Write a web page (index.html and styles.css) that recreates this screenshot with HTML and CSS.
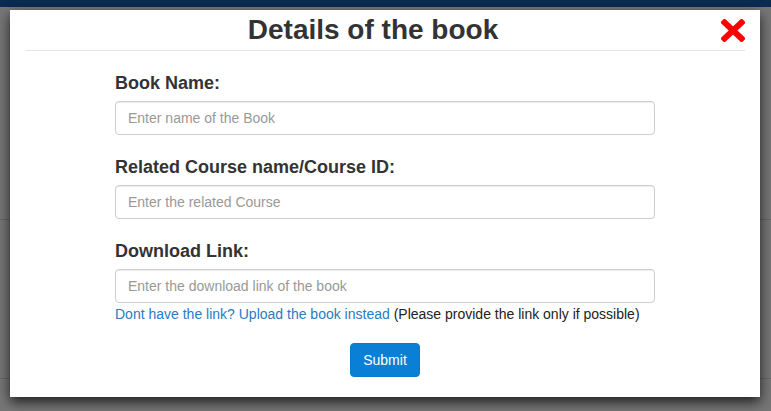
FILE: index.html
```html
<!DOCTYPE html>
<html>
<head>
<meta charset="utf-8">
<link rel="stylesheet" href="styles.css">
</head>
<body>
<div class="page">
  <div class="navbar"></div>
  <div class="band band-top"></div>
  <div class="band band-mid"></div>
</div>
<div class="modal">
  <div class="modal-header">
    <h2 class="modal-title">Details of the book</h2>
    <span class="close" aria-label="close">
      <svg width="24" height="23" viewBox="0 0 24 23"><path d="M3.5 3.5 L20.5 19.5 M20.5 3.5 L3.5 19.5" stroke="#ff0000" stroke-width="6" stroke-linecap="square" fill="none"/></svg>
    </span>
  </div>
  <form class="form">
    <div class="form-group">
      <label class="label">Book Name:</label>
      <input class="input" type="text" placeholder="Enter name of the Book">
    </div>
    <div class="form-group">
      <label class="label">Related Course name/Course ID:</label>
      <input class="input" type="text" placeholder="Enter the related Course">
    </div>
    <div class="form-group last">
      <label class="label">Download Link:</label>
      <input class="input" type="text" placeholder="Enter the download link of the book">
      <p class="help"><a class="link" href="#">Dont have the link? Upload the book instead</a> (Please provide the link only if possible)</p>
    </div>
    <div class="actions">
      <button class="btn" type="button">Submit</button>
    </div>
  </form>
</div>
</body>
</html>
```
FILE: styles.css
```css
html, body {
  margin: 0;
  padding: 0;
  height: 100%;
}
body {
  font-family: "Liberation Sans", Arial, sans-serif;
  font-size: 14px;
  color: #333;
  background: #777;
  overflow: hidden;
}
.page {
  height: 100%;
  display: flex;
  flex-direction: column;
}
.navbar {
  height: 7px;
  background: #0b2b52;
}
.band {
  border-bottom: 1px solid #686868;
}
.band-top {
  height: 212px;
}
.band-mid {
  height: 158px;
}
.modal {
  position: absolute;
  left: 10px;
  top: 10px;
  width: 750px;
  height: 387px;
  background: #fff;
  box-shadow: 0 5px 12px rgba(0, 0, 0, 0.75);
}
.modal-header {
  margin: 0 15px;
  height: 40px;
  border-bottom: 1px solid #e5e5e5;
  display: flex;
  align-items: flex-start;
}
.modal-title {
  flex: 1;
  margin: 0;
  text-align: center;
  font-size: 28px;
  font-weight: bold;
  line-height: 40px;
  color: #333;
}
.close {
  margin-top: 9px;
  width: 24px;
  height: 23px;
  display: block;
}
.close svg {
  display: block;
}
.form {
  width: 540px;
  margin: 18px auto 0;
}
.form-group {
  display: flex;
  flex-direction: column;
  margin-bottom: 18px;
}
.form-group.last {
  margin-bottom: 19px;
}
.label {
  font-size: 18px;
  font-weight: bold;
  line-height: 28px;
  margin-bottom: 4px;
  color: #333;
}
.input {
  box-sizing: border-box;
  height: 34px;
  width: 100%;
  padding: 6px 12px;
  font-family: "Liberation Sans", Arial, sans-serif;
  font-size: 14px;
  color: #555;
  border: 1px solid #ccc;
  border-radius: 4px;
  box-shadow: inset 0 1px 1px rgba(0, 0, 0, 0.075);
  outline: none;
}
.input::placeholder {
  color: #999;
}
.help {
  margin: 1px 0 0;
  font-size: 14px;
  line-height: 20px;
  color: #222;
}
.link {
  color: #2a7bbf;
  text-decoration: none;
}
.actions {
  display: flex;
  justify-content: center;
}
.btn {
  box-sizing: border-box;
  height: 34px;
  width: 70px;
  padding: 0;
  font-family: "Liberation Sans", Arial, sans-serif;
  font-size: 14px;
  color: #fff;
  background: #0a7fd6;
  border: 1px solid #0a7acd;
  border-radius: 4px;
}
```
